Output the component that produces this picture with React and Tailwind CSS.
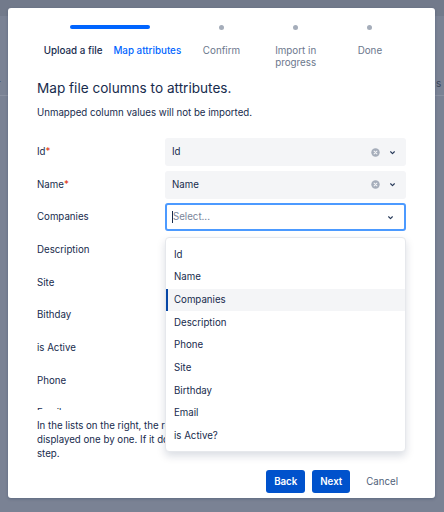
import React from 'react';

const fields = [
  { label: 'Id', required: true, value: 'Id' },
  { label: 'Name', required: true, value: 'Name' },
  { label: 'Companies', open: true },
  { label: 'Description' },
  { label: 'Site' },
  { label: 'Bithday' },
  { label: 'is Active' },
  { label: 'Phone' },
  { label: 'Email' },
  { label: 'Notes' },
];

const options = ['Id', 'Name', 'Companies', 'Description', 'Phone', 'Site', 'Birthday', 'Email', 'is Active?'];

const steps = [
  { label: 'Upload a file', state: 'done' },
  { label: 'Map attributes', state: 'current' },
  { label: 'Confirm' },
  { label: 'Import in progress' },
  { label: 'Done' },
];

function Chevron() {
  return (
    <svg width="9" height="9" viewBox="0 0 24 24" className="text-[#253858]">
      <path d="M7 10l5 5 5-5" fill="none" stroke="currentColor" strokeWidth="3" strokeLinecap="round" strokeLinejoin="round" />
    </svg>
  );
}

function ClearIcon() {
  return (
    <svg width="9" height="9" viewBox="0 0 16 16">
      <circle cx="8" cy="8" r="7.5" fill="#a5adba" />
      <path d="M5.5 5.5l5 5M10.5 5.5l-5 5" stroke="#f4f5f7" strokeWidth="1.8" strokeLinecap="round" />
    </svg>
  );
}

function SelectBox({ field }) {
  if (field.open) {
    return (
      <div className="relative">
        <div className="h-[28px] flex items-center bg-white border-2 border-[#4c9aff] rounded-[3px] pl-[5px] pr-[9px]">
          <span className="w-px h-[12px] bg-[#172b4d]" />
          <span className="flex-1 text-[#7a869a]">Select...</span>
          <Chevron />
        </div>
        <div className="absolute left-0 right-0 top-[34px] z-10 bg-white rounded-[4px] border border-[#e6e8ec] shadow-[0_4px_8px_rgba(9,30,66,0.15)] pt-[5px] pb-[4px]">
          {options.map((o) => (
            <div
              key={o}
              className={
                o === 'Companies'
                  ? 'h-[22.67px] flex items-center pl-[6px] bg-[#f4f5f7] border-l-2 border-[#0747a6] text-[#172b4d]'
                  : 'h-[22.67px] flex items-center pl-[8px] text-[#172b4d]'
              }
            >
              {o}
            </div>
          ))}
        </div>
      </div>
    );
  }
  if (!field.value) return <div className="h-[28px]" />;
  return (
    <div className="h-[28px] flex items-center bg-[#f4f5f7] rounded-[3px] pl-[7px] pr-[9px]">
      <span className="flex-1 text-[#172b4d]">{field.value}</span>
      <span className="mr-[8px] flex"><ClearIcon /></span>
      <Chevron />
    </div>
  );
}

export default function App() {
  return (
    <div
      className="relative w-[444px] h-[512px] bg-[#7a8294] overflow-hidden"
      style={{ fontFamily: 'Inter, "Noto Sans", sans-serif' }}
    >
      {/* page behind the overlay */}
      <div className="absolute left-0 right-0 top-0 h-[16px] bg-[#727a8b]" />
      <div className="absolute left-0 right-0 top-[95px] h-px bg-[#8990a0]" />
      <span className="absolute left-[-3px] top-[76px] text-[10px] text-[#3b4559]">r</span>
      <span className="absolute left-[436px] top-[76px] text-[10px] text-[#3b4559] whitespace-nowrap">s A</span>

      <div className="absolute left-[8px] top-[8px] w-[427px] h-[490px] bg-white rounded-[3px] shadow-[0_1px_3px_rgba(9,30,66,0.25)] px-[29px] pt-[17px] text-[9.7px] leading-[14px] text-[#172b4d]">
        {/* stepper */}
        <div className="relative grid grid-cols-5 w-[371px] -ml-[1px] h-[44px]">
          <div className="absolute left-[34px] top-0 w-[80px] h-[4px] rounded-full bg-[#0065ff]" />
          {steps.map((s, i) => (
            <div key={s.label} className="flex flex-col items-center">
              <div className="h-[4px] flex items-center justify-center">
                {i > 1 && <span className="w-[5px] h-[5px] rounded-full bg-[#a5adba]" />}
              </div>
              <div
                className={
                  'mt-[16px] text-center leading-[12px] text-[9.8px] ' +
                  (s.state === 'done'
                    ? 'text-[#172b4d] font-medium whitespace-nowrap'
                    : s.state === 'current'
                    ? 'text-[#0065ff] font-medium whitespace-nowrap'
                    : 'text-[#6b778c] w-[50px]')
                }
              >
                {s.label}
              </div>
            </div>
          ))}
        </div>

        <h1 className="mt-[9px] text-[13.6px] leading-[20px] text-[#172b4d]">Map file columns to attributes.</h1>
        <p className="mt-[8px] text-[#172b4d]">Unmapped column values will not be imported.</p>

        {/* mapping rows */}
        <div className="relative mt-[18px]">
          <div className="h-[272px] overflow-hidden">
            <div className="flex flex-col gap-[4.67px]">
              {fields.map((f) => (
                <div key={f.label} className="grid grid-cols-[128px_1fr] items-center h-[28px]">
                  <div>
                    {f.label}
                    {f.required && <span className="text-[#de350b]">*</span>}
                  </div>
                  {!f.open && <SelectBox field={f} />}
                  {f.open && <div className="h-[28px]" />}
                </div>
              ))}
            </div>
          </div>
          <div className="absolute left-[128px] right-0 top-[65.34px]">
            <SelectBox field={fields[2]} />
          </div>
        </div>

        <p className="mt-[9px] text-[#172b4d]">
          In the lists on the right, the required attributes will be
          <br />
          displayed one by one. If it does not match, go back to the previous
          <br />
          step.
        </p>

        <div className="mt-[9px] flex justify-end items-center gap-[7px]">
          <button className="h-[23px] px-[8px] rounded-[3px] bg-[#0052cc] text-white font-semibold">Back</button>
          <button className="h-[23px] px-[8px] rounded-[3px] bg-[#0052cc] text-white font-semibold">Next</button>
          <button className="h-[23px] px-[8px] ml-[1px] text-[#505f79]">Cancel</button>
        </div>
      </div>
    </div>
  );
}
